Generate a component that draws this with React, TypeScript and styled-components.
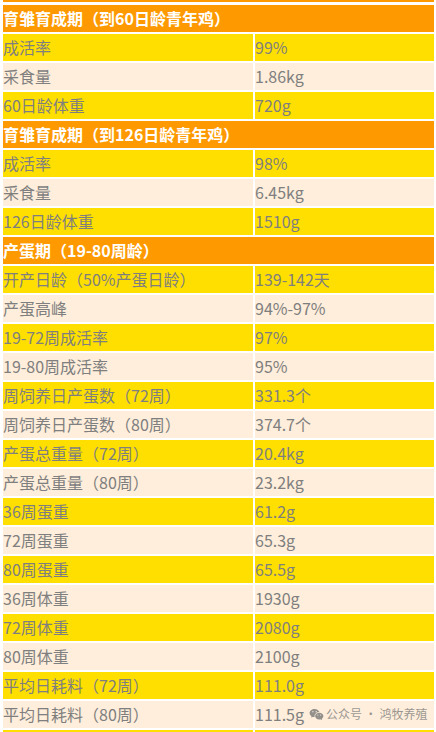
import styled, { createGlobalStyle } from "styled-components";
import { RiWechatFill } from "react-icons/ri";

type Row = { label: string; value: string };
type Section = { title: string; rows: Row[] };

const sections: Section[] = [
  {
    title: "育雏育成期（到60日龄青年鸡）",
    rows: [
      { label: "成活率", value: "99%" },
      { label: "采食量", value: "1.86kg" },
      { label: "60日龄体重", value: "720g" },
    ],
  },
  {
    title: "育雏育成期（到126日龄青年鸡）",
    rows: [
      { label: "成活率", value: "98%" },
      { label: "采食量", value: "6.45kg" },
      { label: "126日龄体重", value: "1510g" },
    ],
  },
  {
    title: "产蛋期（19-80周龄）",
    rows: [
      { label: "开产日龄（50%产蛋日龄）", value: "139-142天" },
      { label: "产蛋高峰", value: "94%-97%" },
      { label: "19-72周成活率", value: "97%" },
      { label: "19-80周成活率", value: "95%" },
      { label: "周饲养日产蛋数（72周）", value: "331.3个" },
      { label: "周饲养日产蛋数（80周）", value: "374.7个" },
      { label: "产蛋总重量（72周）", value: "20.4kg" },
      { label: "产蛋总重量（80周）", value: "23.2kg" },
      { label: "36周蛋重", value: "61.2g" },
      { label: "72周蛋重", value: "65.3g" },
      { label: "80周蛋重", value: "65.5g" },
      { label: "36周体重", value: "1930g" },
      { label: "72周体重", value: "2080g" },
      { label: "80周体重", value: "2100g" },
      { label: "平均日耗料（72周）", value: "111.0g" },
      { label: "平均日耗料（80周）", value: "111.5g" },
      // next row is cut off by the bottom edge
      { label: "", value: "" },
    ],
  },
];

const GlobalStyle = createGlobalStyle`
  html, body {
    margin: 0;
    padding: 0;
    background: #fff;
    overflow: hidden;
  }
  body {
    font-family: "Microsoft YaHei", "Noto Sans CJK SC", "Noto Sans", sans-serif;
  }
`;

const Page = styled.div`
  position: relative;
  width: 436px;
  height: 732px;
  overflow: hidden;
  padding-left: 1px;
  box-sizing: border-box;
`;

const TopStrip = styled.div`
  height: 2px;
  margin: 0 2px 0 2px;
  background: #ff9900;
`;

const Table = styled.table`
  width: 435px;
  border-collapse: separate;
  border-spacing: 2px;
  margin-top: 1px;
  table-layout: fixed;
`;

const HeadCell = styled.td`
  height: 27px;
  padding: 0;
  background: #ff9900;
  color: #fff;
  font-size: 16px;
  font-weight: 700;
  line-height: 27px;
  white-space: nowrap;
  vertical-align: middle;
`;

const Cell = styled.td<{ $alt: boolean }>`
  height: 27px;
  padding: 0;
  background: ${({ $alt }) => ($alt ? "#feeedb" : "#ffdf00")};
  color: #7f7f7f;
  font-size: 16px;
  line-height: 27px;
  white-space: nowrap;
  vertical-align: middle;
`;

const LabelCol = styled.col`
  width: 250px;
`;

const Watermark = styled.div`
  position: absolute;
  left: 309px;
  top: 706px;
  display: flex;
  align-items: center;
  gap: 2px;
  color: rgba(120, 120, 120, 0.75);
  font-size: 12px;
  line-height: 16px;
  white-space: nowrap;
  svg {
    font-size: 15px;
    color: rgba(120, 120, 120, 0.8);
  }
`;

const App = () => {
  return (
    <Page>
      <GlobalStyle />
      <TopStrip />
      <Table>
        <colgroup>
          <LabelCol />
          <col />
        </colgroup>
        <tbody>
          {sections.map((s) => (
            <>
              <tr key={s.title}>
                <HeadCell colSpan={2}>{s.title}</HeadCell>
              </tr>
              {s.rows.map((r, i) => (
                <tr key={s.title + i}>
                  <Cell $alt={i % 2 === 1}>{r.label}</Cell>
                  <Cell $alt={i % 2 === 1}>{r.value}</Cell>
                </tr>
              ))}
            </>
          ))}
        </tbody>
      </Table>
      <Watermark>
        <RiWechatFill />
        <span>公众号 · 鸿牧养殖</span>
      </Watermark>
    </Page>
  );
};

export default App;
